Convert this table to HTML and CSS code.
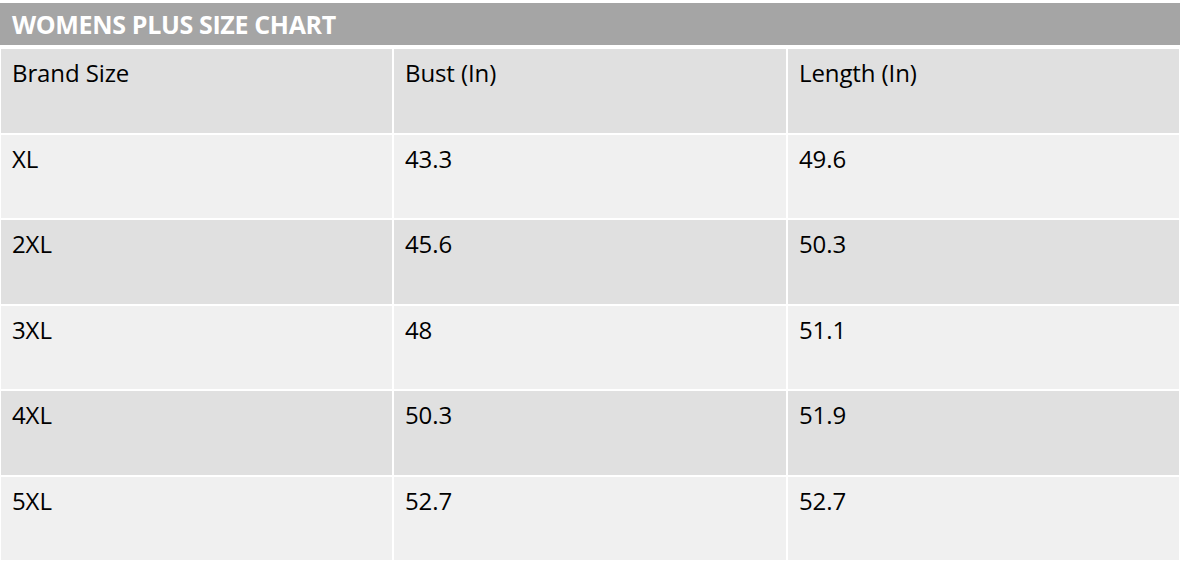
FILE: index.html
```html
<!DOCTYPE html>
<html>
<head>
<meta charset="utf-8">
<link rel="stylesheet" href="styles.css">
</head>
<body>
<div class="chart">
  <div class="title">WOMENS PLUS SIZE CHART</div>
  <div class="grid">
    <div class="cell head">Brand Size</div><div class="cell head">Bust (In)</div><div class="cell head">Length (In)</div>
    <div class="cell odd">XL</div><div class="cell odd">43.3</div><div class="cell odd">49.6</div>
    <div class="cell even">2XL</div><div class="cell even">45.6</div><div class="cell even">50.3</div>
    <div class="cell odd">3XL</div><div class="cell odd">48</div><div class="cell odd">51.1</div>
    <div class="cell even">4XL</div><div class="cell even">50.3</div><div class="cell even">51.9</div>
    <div class="cell odd">5XL</div><div class="cell odd">52.7</div><div class="cell odd">52.7</div>
  </div>
</div>
</body>
</html>
```

FILE: styles.css
```css
html, body {
  margin: 0;
  padding: 0;
  background: #ffffff;
}
body {
  font-family: "Open Sans", "Liberation Sans", sans-serif;
  color: #000;
}
.chart {
  width: 1181px;
  padding-top: 3px;
}
.title {
  width: 1168px;
  height: 42px;
  background: #a5a5a5;
  color: #ffffff;
  font-weight: bold;
  font-size: 25px;
  line-height: 42px;
  padding-left: 12px;
  letter-spacing: -0.35px;
}
.grid {
  margin-top: 4px;
  margin-left: 1px;
  width: 1178px;
  display: grid;
  grid-template-columns: 391px 392px 391px;
  grid-auto-rows: 83.5px;
  column-gap: 2px;
  row-gap: 2px;
}
.cell {
  font-size: 24px;
  padding: 7px 0 0 11px;
  line-height: 34px;
  letter-spacing: -0.1px;
}
.head, .even { background: #e0e0e0; }
.odd { background: #f0f0f0; }
```
